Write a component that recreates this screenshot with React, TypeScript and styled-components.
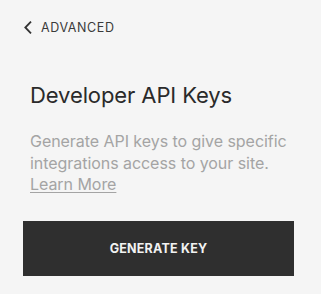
import React from "react";
import styled, { createGlobalStyle } from "styled-components";

const GlobalStyle = createGlobalStyle`
  html, body {
    margin: 0;
    padding: 0;
    background: #f5f5f5;
  }
  body {
    font-family: Inter, "Liberation Sans", sans-serif;
    -webkit-font-smoothing: antialiased;
  }
`;

const Panel = styled.div`
  width: 321px;
  height: 294px;
  box-sizing: border-box;
  padding: 20px 27px 0 23px;
  background: #f5f5f5;
`;

const BackLink = styled.a`
  display: flex;
  align-items: center;
  gap: 9px;
  padding-left: 1px;
  height: 14px;
  color: #3a3a3a;
  font-size: 12.5px;
  letter-spacing: 0.6px;
  text-decoration: none;
  cursor: pointer;
`;

const Body = styled.div`
  padding: 47px 0 0 7px;
`;

const Heading = styled.h1`
  margin: 0;
  font-size: 22px;
  font-weight: 400;
  line-height: 28px;
  color: #2a2a2a;
  letter-spacing: -0.1px;
`;

const Description = styled.p`
  margin: 22px 0 0;
  font-size: 16px;
  line-height: 21.5px;
  color: #a4a4a4;
  letter-spacing: -0.05px;
`;

const LearnMore = styled.a`
  color: #a4a4a4;
  text-decoration: underline;
  text-underline-offset: 2px;
  cursor: pointer;
`;

const GenerateButton = styled.button`
  display: block;
  width: 271px;
  height: 55px;
  margin-top: 25px;
  border: none;
  background: #2f2f2f;
  color: #f2f2f2;
  font-family: inherit;
  font-size: 12.5px;
  font-weight: 700;
  letter-spacing: 0.2px;
  cursor: pointer;
`;

export default function App() {
  return (
    <>
      <GlobalStyle />
      <Panel>
        <BackLink>
          <svg width="8" height="13" viewBox="0 0 8 13" fill="none">
            <path d="M7 0.6 L1.3 6.5 L7 12.4" stroke="#333" strokeWidth="1.8" />
          </svg>
          ADVANCED
        </BackLink>
        <Body>
          <Heading>Developer API Keys</Heading>
          <Description>
            Generate API keys to give specific integrations access to your site.{" "}
            <LearnMore>Learn More</LearnMore>
          </Description>
        </Body>
        <GenerateButton>GENERATE KEY</GenerateButton>
      </Panel>
    </>
  );
}
